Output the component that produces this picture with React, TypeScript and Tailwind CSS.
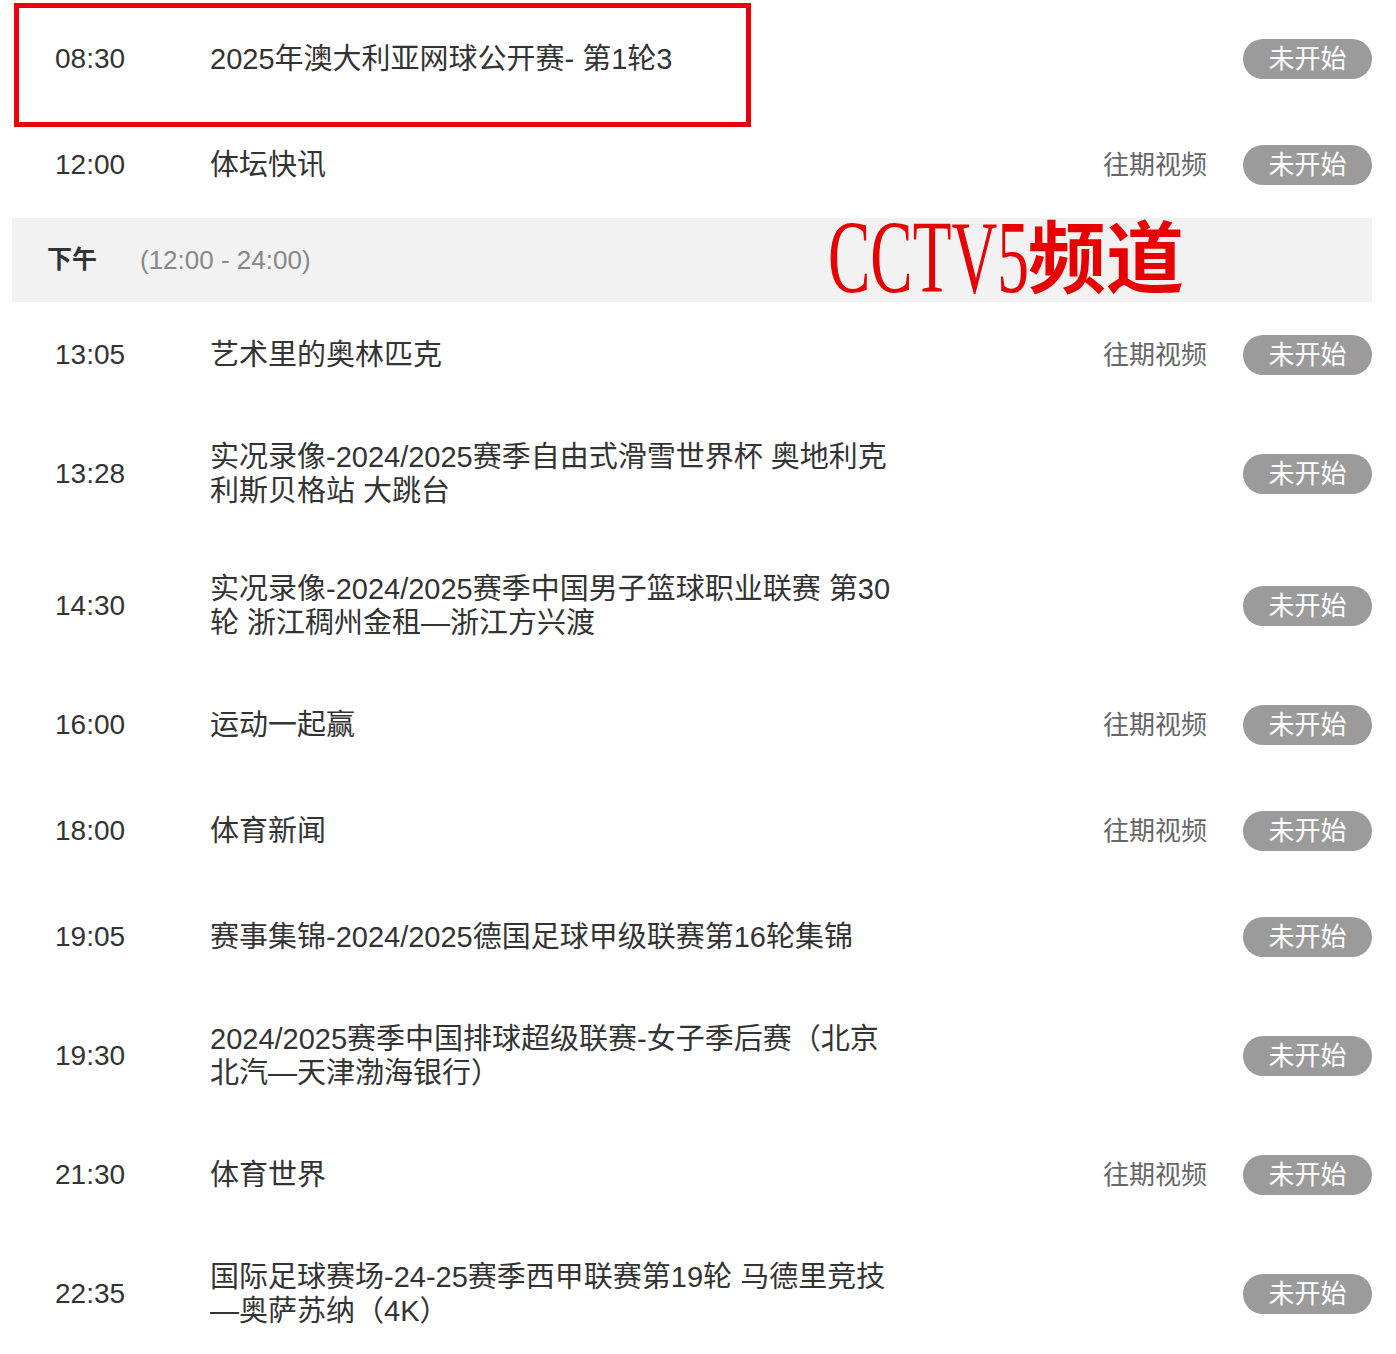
const rows = [
  { time: "08:30", title: ["2025年澳大利亚网球公开赛- 第1轮3"], past: false },
  { time: "12:00", title: ["体坛快讯"], past: true },
  "header",
  { time: "13:05", title: ["艺术里的奥林匹克"], past: true },
  { time: "13:28", title: ["实况录像-2024/2025赛季自由式滑雪世界杯 奥地利克", "利斯贝格站 大跳台"], past: false },
  { time: "14:30", title: ["实况录像-2024/2025赛季中国男子篮球职业联赛 第30", "轮 浙江稠州金租—浙江方兴渡"], past: false },
  { time: "16:00", title: ["运动一起赢"], past: true },
  { time: "18:00", title: ["体育新闻"], past: true },
  { time: "19:05", title: ["赛事集锦-2024/2025德国足球甲级联赛第16轮集锦"], past: false },
  { time: "19:30", title: ["2024/2025赛季中国排球超级联赛-女子季后赛（北京", "北汽—天津渤海银行）"], past: false },
  { time: "21:30", title: ["体育世界"], past: true },
  { time: "22:35", title: ["国际足球赛场-24-25赛季西甲联赛第19轮 马德里竞技", "—奥萨苏纳（4K）"], past: false },
] as const

const App = () => {
  return (
    <div className="relative w-full min-h-screen bg-white pl-[12px] pr-[24px] pt-[6px] font-['Liberation_Sans','Noto_Sans_CJK_SC',sans-serif] text-[#333]">
      {rows.map((row, i) =>
        row === "header" ? (
          <div key={i} className="h-[84px] bg-[#f2f2f2] flex items-center pl-[35px]">
            <span className="w-[93px] text-[25px] font-bold text-[#333]">下午</span>
            <span className="text-[26px] text-[#888]">(12:00 - 24:00)</span>
          </div>
        ) : (
          <div
            key={i}
            className={`flex items-center pl-[43px] ${row.title.length > 1 ? "h-[132px]" : "h-[106px]"}`}
          >
            <div className="w-[155px] text-[28px] leading-[34px]">{row.time}</div>
            <div className="text-[29px] leading-[34px]">
              {row.title.map((line, j) => (
                <div key={j} className="whitespace-nowrap">{line}</div>
              ))}
            </div>
            <div className="flex-1" />
            {row.past && <span className="mr-[36px] text-[26px] text-[#666]">往期视频</span>}
            <span className="w-[129px] h-[40px] rounded-full bg-[#9b9b9b] text-white text-[26px] flex items-center justify-center">
              未开始
            </span>
          </div>
        )
      )}

      {/* annotation overlays */}
      <div className="absolute left-[14px] top-[3px] w-[737px] h-[124px] border-[5px] border-[#e8000e]" />
      <div className="absolute left-[828px] top-[205px] leading-none text-[104px] text-[#e60000] font-['Liberation_Serif','Noto_Sans_CJK_SC',serif] whitespace-nowrap">
        <span className="inline-block w-[200px]">
          <span className="inline-block origin-left scale-x-[0.61]">CCTV5</span>
        </span>
        <span className="relative -top-[5px] text-[78px] font-semibold font-['Noto_Sans_CJK_SC',serif]">频道</span>
      </div>
    </div>
  )
}

export default App
